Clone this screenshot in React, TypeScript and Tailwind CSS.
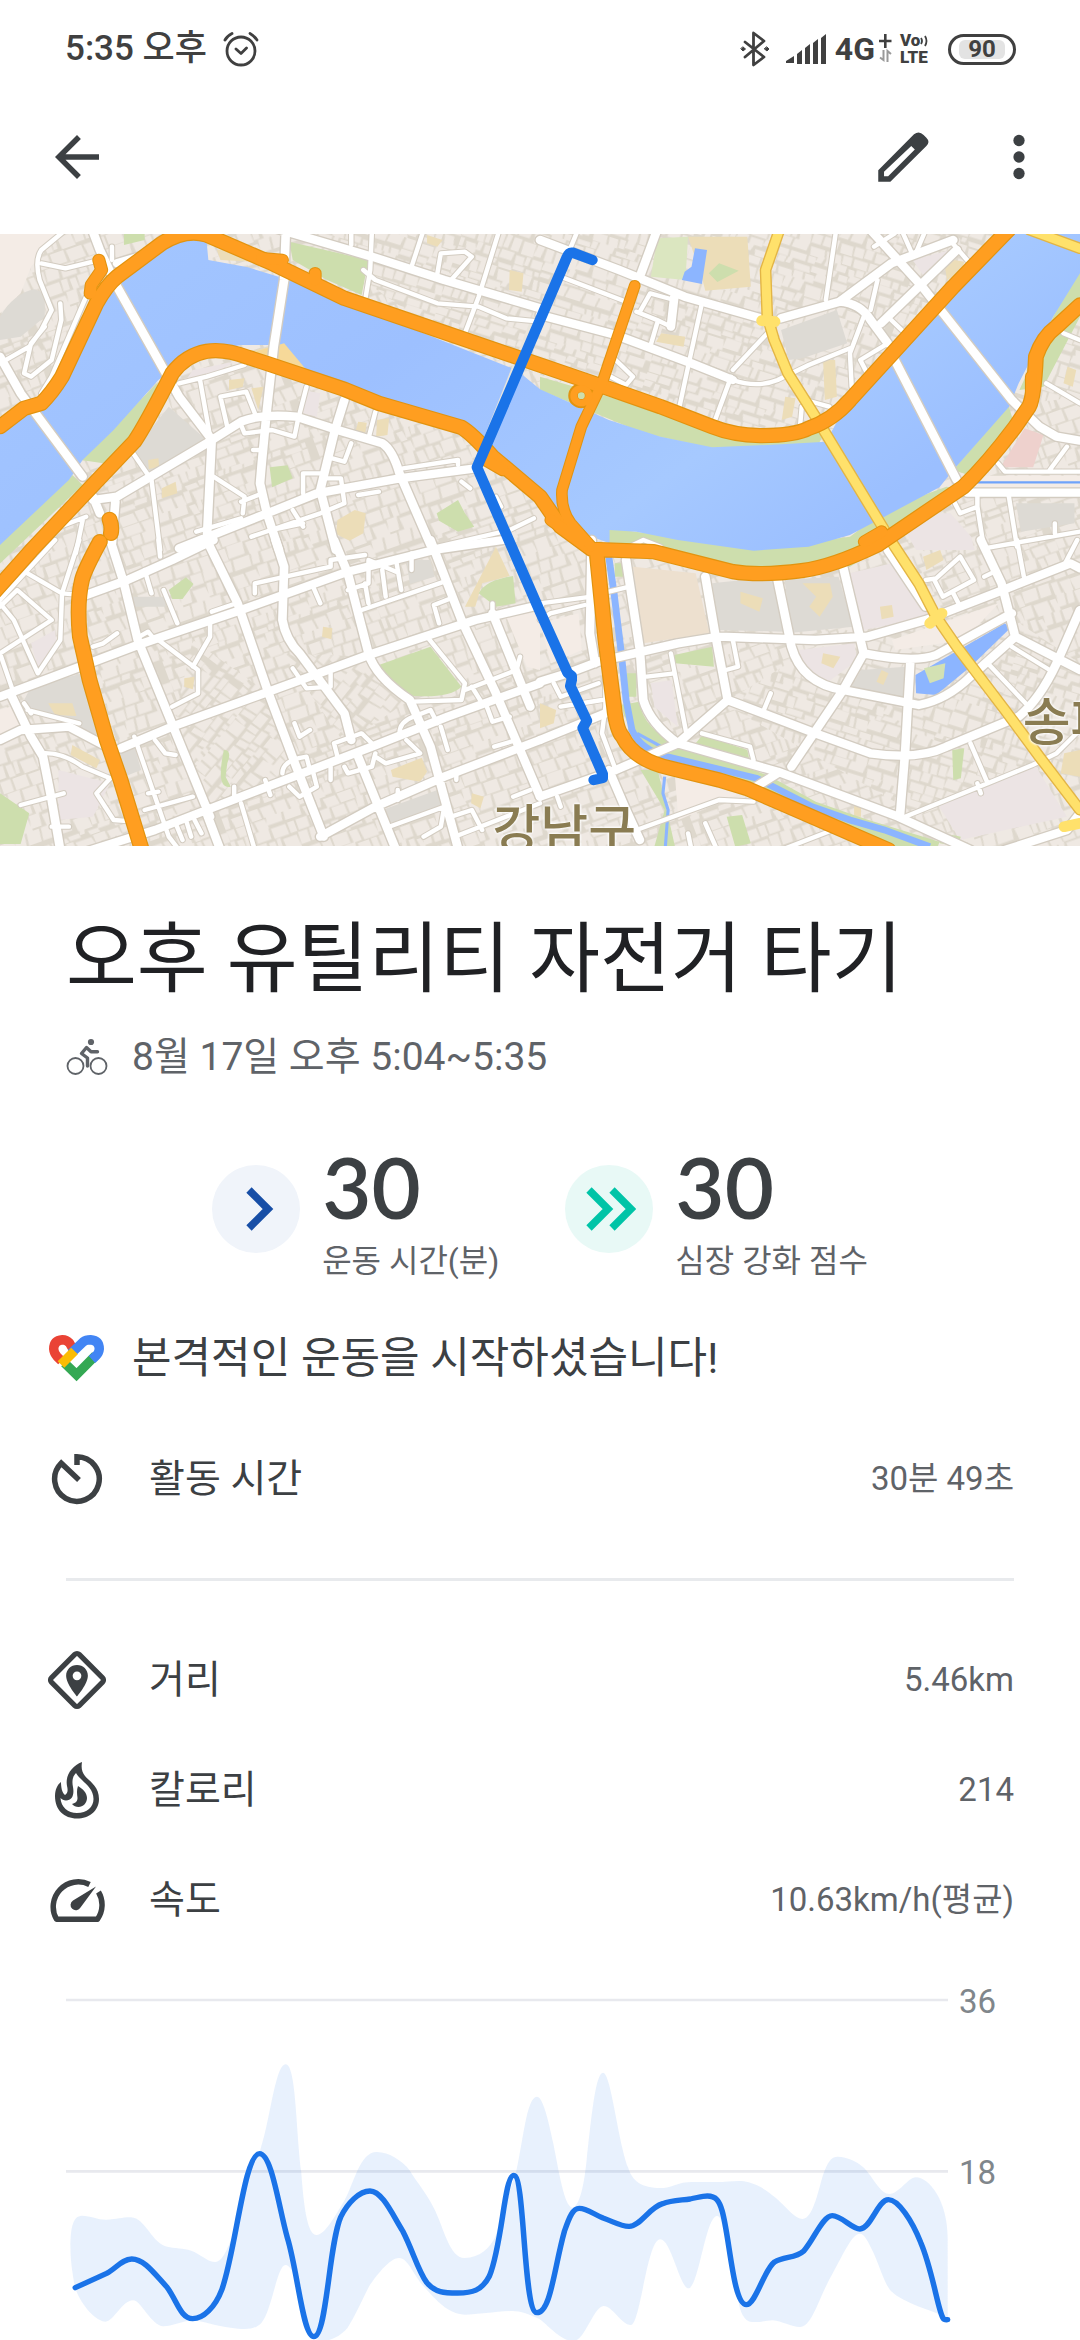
import type { ReactNode } from 'react';

type Quad = { x: number; y: number; wide: string[]; mid: string[] };

/* Street network, grouped by map tile. */
const quads: Quad[] = [
  {
    x: 0,
    y: 0,
    wide: [
      'M268 0L290 60L340 170L520 500L612 625',
      'M0 380L60 490L240 740',
      'M830 0L825 150L795 350L775 540L760 700L755 760L775 850L810 960',
      'M600 940L615 625',
      'M270 810L340 800L600 640L700 575Q760 550 860 560L980 600L1110 640Q1140 660 1160 730L1250 945',
      'M520 955L800 840L920 790L1160 745L1380 715',
      'M800 -5L1080 80L1290 150L1568 235',
      'M1000 510L970 610L930 780L975 960',
      'M340 100L420 75L470 30',
      'M270 800L290 850M335 815L325 940',
    ],
    mid: [
      'M190 0L120 60Q100 90 115 150L150 240L120 300L85 350L0 400',
      'M120 100L190 115L270 95M325 50V90',
      'M175 220L178 270L150 390L90 440L70 430L90 340L130 290',
      'M250 200L150 440L120 490',
      'M520 460L600 440L710 405M580 445L610 620',
      'M740 550L715 485L640 500L660 590',
      'M890 470L865 570L855 620L790 600L710 610L700 585',
      'M1090 545L1070 625M1020 640L1000 695L965 685',
      'M380 660L440 750L465 960',
      'M620 740L710 800L705 850M750 795L700 815M735 660H760',
      'M880 790V730H940M940 745L990 745L1000 820L930 850L730 920',
      'M850 840L880 890M790 900L880 880',
      'M1170 715L1330 690V705M1040 795L1100 785',
      'M570 905L700 865M1250 955L1480 900L1550 865',
      'M1080 0L1075 120L1062 200',
      'M1055 120L1090 150L1270 220L1390 230L1470 265L1568 275',
      'M1450 0L1390 200L1350 310M1230 0L1195 110M1020 0V45',
      'M1270 130L1280 70L1350 65L1370 80L1310 150',
      'M80 970L150 900L250 860M240 870L220 970M1340 755L1365 775M1440 800L1455 830',
    ],
  },
  {
    x: 1568,
    y: 0,
    wide: [
      'M0 30L230 120L290 145L420 200L640 265M700 265L870 215L1020 100L1200 30',
      'M340 0L290 140M0 255L220 315L440 400L560 450',
      'M960 0L1110 170L1370 510L1450 590L1500 620L1568 632',
      'M870 215Q930 220 960 270L1010 340M990 280L1210 60',
      'M390 200L380 290M1240 788H1568M1030 390L1210 750',
    ],
    mid: [
      'M110 0L90 50M60 140L250 215M280 245L340 270L380 290M340 280L320 350',
      'M470 220L430 410L405 530M660 310L560 420M555 440L505 580',
      'M560 450Q630 475 690 450L780 405L900 355',
      'M860 0L830 210M980 150L960 240M940 260L900 370L905 470M1010 340L930 390L950 430',
      'M1190 30L1240 90M1020 270L1050 300M1120 0L1095 60',
      'M210 380L270 440L250 465L205 440',
      'M290 245L320 190L390 210M770 510L840 530M760 530L755 590',
      'M1470 460L1568 520M1520 310L1568 330',
      'M1330 700L1350 725H1568M1530 650L1480 720',
      'M1200 810L1220 850L1270 830V790M1270 830L1290 960',
      'M1360 790L1385 950M1290 955L1568 905M1495 880V910',
      'M1080 70L1050 0M970 50L1030 10M270 945L300 930L350 950',
    ],
  },
  {
    x: 0,
    y: 930,
    wide: [
      'M320 0L360 130L400 300L495 540L610 830',
      'M0 470L130 420L400 315L700 210L1010 95L1260 30L1460 0',
      'M600 0L690 190L780 460L860 680L940 890',
      'M800 0L825 80L820 240Q830 300 870 340L1000 520L1020 600',
      'M0 600L60 570L200 560L310 620',
      'M350 625L500 560L900 410L1070 345L1380 240L1568 195',
      'M250 935L450 870L600 810L1080 620L1300 530L1568 430',
      'M1250 0L1340 240L1440 460L1568 770',
      'M970 0L1010 100L1070 340Q1090 410 1190 480L1250 620L1330 925',
      'M30 460L90 590L125 650L150 780L175 930',
      'M930 890L1090 800L1290 710L1568 600',
      'M1040 650L1150 930M1430 220L1540 500',
      'M250 165L370 120L500 60L620 0M600 820L640 930',
    ],
    mid: [
      'M0 340L150 240L50 150L0 200M160 0L0 180M80 100L180 160',
      'M230 0L180 160L175 300L110 400L40 240L0 190M0 340L40 460M180 160L240 165',
      'M460 0L465 50M420 90L440 160M475 150L515 250M270 320L300 310L340 280',
      'M460 300L575 390V460L500 500M610 240V290L560 380M405 290L430 275L450 300',
      'M740 160V130L960 80V60L1060 45M615 215L680 192',
      'M1150 60L1165 150M1110 90L1120 170M1050 210L1290 125M1195 40V90M1060 130L1070 190M1010 150L1070 130V60L1150 95',
      'M905 130L930 190M1310 175L1260 195L1275 250M1430 190V220',
      'M1240 290L1350 430L1340 480L1200 485M1350 450L1500 390L1510 350',
      'M850 385L890 445L960 440V400M855 550L870 590L900 570',
      'M120 640Q180 635 240 680L320 715L280 760L330 840L390 845',
      'M60 795L185 760M150 860H200M80 510L230 550M70 490L90 520',
      'M390 590L490 890L520 930M450 600L480 640L510 645M420 810L560 770M430 760L460 755',
      'M700 790L740 930M680 740V780M770 720L785 765',
      'M820 700Q820 660 890 650L900 690M840 740L870 770L920 740L910 700',
      'M980 650L970 610L1050 580L1090 620M960 680V720M1000 680L1010 700L1080 680L1090 640',
      'M1160 580Q1160 545 1200 530L1250 510L1270 550M1280 560L1300 630',
      'M1090 650L1120 670L1220 640L1180 600M1410 490L1430 545L1480 530M1370 440L1400 490',
      'M1130 860L1290 800L1280 860L1230 890M1490 770L1540 750M1310 830L1370 810L1400 870M1320 890L1568 790',
      'M510 850L530 900M540 840L555 890M565 840L585 880M1325 690V720M1155 750V780M1435 620L1500 600',
    ],
  },
  {
    x: 1568,
    y: 930,
    wide: [
      'M0 425L80 400L170 365L400 310L520 290L800 300L950 290L1120 240L1320 160L1540 70L1568 85',
      'M250 60L290 330L300 480Q320 550 400 610',
      'M480 110L510 290L545 480L400 610L690 695L1040 830L1250 930',
      'M690 120L730 320Q760 430 880 450L1100 495Q1180 480 1250 410L1380 290L1340 130L1280 0',
      'M880 80L940 340L880 450L730 680',
      'M940 340Q1090 370 1150 345L1370 220',
      'M545 480L800 580L960 640Q1100 660 1180 620L1390 530Q1450 480 1500 370L1568 210',
      'M1380 290L1568 390M1075 370L1060 640L1045 830',
      'M400 610L220 690L0 770M200 690L250 810L290 900',
      'M150 0L145 280L160 370M620 745L690 700M0 600L190 520',
      'M1568 820L1530 870L1350 930M1010 30L1120 200',
    ],
    mid: [
      'M200 155L260 140M0 190L150 170M0 240L30 220L130 195',
      'M380 340L425 580M310 410L390 400M560 300L575 380L540 390',
      'M650 510L670 460M470 580L610 620L620 660',
      'M1250 610L1300 730M1060 830L1300 730L1430 675L1500 640L1568 570M1270 730L1280 760',
      'M1300 370L1410 490M1370 320L1480 390M1385 0L1405 110',
      'M1220 50L1260 120L1170 170L1145 120L1220 50M1120 120L1150 115M1200 160L1215 190M1290 110L1320 95',
      'M280 870L520 780L620 785M480 850L510 920M430 880L440 930M700 930L850 870',
      'M1560 0L1525 70M40 430L60 470L170 430M60 500L180 480M50 770L60 800M190 370V500L180 580L220 690',
    ],
  },
];

const northHighway =
  'M0 590L70 535L120 520Q150 490 180 440L280 220Q310 165 340 140L470 40Q540 -5 600 15L790 100L1000 205L1568 405L1738 465L1918 530L2068 590Q2128 615 2208 617Q2308 617 2348 595Q2418 570 2468 510L2768 170L2928 0';
const southHighway =
  'M-20 1090L90 962L270 765L390 635Q420 590 500 430Q540 375 600 364Q650 355 720 382L780 402L1000 478L1100 520L1340 592Q1370 610 1430 680L1568 800L1628 890L1718 958L1898 965L2128 1025Q2208 1038 2328 1022Q2418 1010 2548 945L2798 770Q2868 700 2948 590L2988 530Q3003 500 3008 380Q3028 320 3068 290L3136 225';
const otherHighways = [
  'M1733 972L1758 1230L1783 1430Q1790 1500 1808 1520Q1840 1590 1948 1615L2088 1650L2168 1675L2268 1720L2580 1860',
  'M318 868Q326 890 322 910',
  'M290 935Q245 1020 238 1050Q222 1120 232 1220L260 1350L310 1530L350 1650L412 1860',
];
const yellowRoad =
  'M2263 0L2223 120L2228 260L2248 330L2288 430L2368 560L2568 900L2598 950L2668 1060L2718 1160L2778 1250L2918 1440L3018 1580L3136 1740';

const greens = [
  'M840 35L1070 90L1050 195L950 150L850 90Z',
  'M360 10H420V30L360 45Z',
  'M460 455L235 690L300 700L410 600Z',
  'M210 735L-10 950V1010L240 765Z',
  'M783 712L835 706L850 745L790 772Z',
  'M1268 850L1330 810L1350 850L1377 890L1330 905L1275 872Z',
  'M2058 130L2088 100L2145 122L2083 156Z',
  'M1568 440L1768 500L2050 590L2398 600L2378 640L2068 655L1868 610L1568 480Z',
  'M3136 110L3058 260L2960 480L3030 470L3136 260Z',
  'M2928 525L2768 720L2828 740L2950 600Z',
  'M1768 895L2208 955L2468 920L2578 835L2748 770L2818 780L2468 1010L2068 1010L1768 950Z',
  'M1100 1305L1250 1250L1340 1370Q1300 1410 1170 1395Q1130 1360 1100 1305Z',
  'M1390 1090Q1410 1050 1490 1038L1497 1120L1440 1130Z',
  'M490 1080L540 1042L562 1062L530 1107H500Z',
  'M0 1690L85 1750L60 1842H0Z',
  'M650 1560Q675 1560 660 1600L655 1640L670 1670Q625 1680 650 1560Z',
  'M1958 1275L2068 1250L2073 1310L1960 1300Z',
  'M2040 1515L2170 1560L2175 1585L2020 1540Z',
  'M1860 1620L1910 1620L1960 1850H1900L1930 1740Z',
  'M2765 1560L2800 1555L2790 1645L2768 1650Z',
  'M2110 1760L2155 1755L2180 1840L2135 1850Z',
  'M2690 1800L2790 1820L2780 1850L2730 1840Z',
  'M1820 1330H1848V1400H1820Z',
  'M1785 1000H1810V1040H1785Z',
];
const beiges = [
  'M980 870L1030 840L1062 850L1055 910L1015 932L975 912Z',
  'M725 365L825 340L895 425Z',
  'M1998 20H2170L2180 170L2048 182L2040 150Z',
  'M630 60L700 50L740 95L640 90Z',
  'M1350 1130L1440 950L1480 1038L1400 1060L1380 1130Z',
  'M1135 1620L1225 1583L1240 1625L1220 1655L1140 1640Z',
  'M140 1420H210L222 1458L160 1455Z',
  'M210 1545L290 1590L280 1615L205 1575Z',
  'M2150 1085L2215 1105L2205 1145L2150 1120Z',
  'M2330 1060L2410 1060L2418 1100L2380 1160L2350 1130L2370 1100Z',
  'M2555 1130L2590 1125L2595 1160L2560 1168Z',
  'M2390 1270L2440 1280L2420 1315L2385 1300Z',
  'M2560 1320L2580 1330L2565 1365L2545 1355Z',
  'M1920 310L1990 320L1985 350L1905 335Z',
  'M2390 390H2425L2430 500L2395 510Z',
  'M2280 500L2310 505L2300 560L2270 570Z',
  'M1480 120L1520 130L1515 185L1478 180Z',
  'M1240 15L1285 30L1270 50L1240 40Z',
  'M665 450L710 445L705 470L665 480Z',
  'M730 475L765 470L750 540Z',
  'M1095 570L1130 565L1125 615L1092 620Z',
  'M1040 575L1065 578L1060 612L1032 605Z',
  'M470 775L510 755L515 790L470 805Z',
  'M430 690L460 685L462 710L432 718Z',
  'M2740 85L2800 95L2790 130L2750 150Z',
  'M2480 1720H2500V1760H2480Z',
  'M3090 1570L3136 1560V1640L3080 1630Z',
  'M1568 1420L1615 1440L1608 1480L1568 1495Z',
  'M3100 410L3125 420L3115 470L3088 460Z',
  'M2680 980L2730 960L2740 990L2690 1020Z',
  'M1370 1690L1405 1700L1395 1735L1368 1720Z',
  'M535 1345L565 1340L560 1378L535 1370Z',
  'M938 1190L965 1195L962 1228L935 1220Z',
];
const greys = [
  'M0 260Q40 190 100 178L130 190V260L60 320L0 330Z',
  'M490 530L600 630L440 730L385 665Z',
  'M2268 300L2430 240L2460 340L2330 385L2290 390Z',
  'M2950 820H3120V880L2965 905Z',
  'M90 1370L240 1330L290 1530L230 1490L60 1430Z',
  'M380 1100H480V1130H380Z',
  'M1180 990H1250L1262 1040L1190 1062Z',
  'M2068 1060L2248 1040L2278 1205L2088 1200Z',
  'M2278 1050L2435 1040L2478 1190L2298 1208Z',
  'M2500 1320L2630 1310L2625 1400L2470 1375Z',
  'M1110 1740L1270 1680L1280 1730L1130 1780Z',
  'M330 1560L390 1550L410 1620L360 1640Z',
];
const mauves = [
  'M2468 1030L2628 990L2698 1160L2508 1200Z',
  'M2718 1715L3008 1610L3098 1760L2788 1830Z',
  'M2320 1260L2480 1240L2490 1290L2400 1360L2340 1340Z',
  'M1890 1360L1950 1350L1968 1490L1900 1430Z',
  'M2650 90L2760 60L2690 150Z',
  'M880 480L930 490L920 560L880 550Z',
  'M170 1620L320 1660L270 1760L170 1770Z',
  'M90 1240L160 1200L165 1260L110 1310Z',
  'M2600 850L2760 850L2820 920L2830 960L2660 960Z',
  'M560 420L680 395L640 420L540 450Z',
];

/* Deterministic city-block texture for one repeating tile. */
function blockTile(seed: number): string {
  let s = seed;
  const rnd = () => {
    s = (s * 1103515245 + 12345) % 2147483648;
    return s / 2147483648;
  };
  let d = '';
  let y = 0;
  while (y < 470) {
    const h = Math.round(14 + rnd() * 26);
    let x = 0;
    while (x < 620) {
      const w = Math.round(12 + rnd() * 38);
      const k = Math.round(rnd() * 12 - 6);
      d += `M${x} ${y + k}h${w}l${k} ${h}h${-w}z`;
      x += w + 6;
    }
    y += h + 6;
  }
  return d;
}

function BlockPattern({ id, angle, seed }: { id: string; angle: number; seed: number }) {
  return (
    <pattern id={id} width="640" height="480" patternUnits="userSpaceOnUse" patternTransform={`rotate(${angle})`}>
      <rect width="640" height="480" fill="#ded8cd" />
      <path d={blockTile(seed)} fill="#efe9e3" />
    </pattern>
  );
}

function RoadLayer({ kind, color, width }: { kind: 'wide' | 'mid'; color: string; width: number }) {
  return (
    <>
      {quads.map((q) => (
        <g key={`${q.x}-${q.y}`} transform={`translate(${q.x} ${q.y})`}>
          <path d={q[kind].join('')} fill="none" stroke={color} strokeWidth={width} strokeLinejoin="round" strokeLinecap="round" />
        </g>
      ))}
    </>
  );
}

function RouteMap() {
  const highways = [northHighway, southHighway, ...otherHighways].join('');
  const ramps = 'M287 90L295 120L265 165L262 190M760 85L820 90M915 130V150M1410 690L1460 720M1600 870L1700 945M2510 935L2560 905M2995 440V520';
  const bridge = 'M1843 167L1748 460L1688 590L1632 780Q1628 840 1658 880L1718 950';
  return (
    <section aria-label="운동 경로 지도" className="relative aspect-[1080/612] w-full overflow-hidden bg-[#f1ebe5]">
      <svg viewBox="0 12 3136 1836" preserveAspectRatio="none" className="block h-full w-full" aria-hidden="true">
        <defs>
          <BlockPattern id="blocksA" angle={-20} seed={7} />
          <BlockPattern id="blocksB" angle={18} seed={91} />
          <BlockPattern id="blocksC" angle={-52} seed={33} />
          <linearGradient id="river" x1="0" x2="1" y1="0" y2="0.4">
            <stop offset="0" stopColor="#a4c7ff" />
            <stop offset="0.45" stopColor="#9dc0ff" />
            <stop offset="0.8" stopColor="#a6c9ff" />
            <stop offset="1" stopColor="#9bbfff" />
          </linearGradient>
        </defs>
        <rect width="3136" height="1900" fill="url(#blocksA)" />
        <path d="M850 0L3136 0V500L2100 640L1300 330Z" fill="url(#blocksB)" />
        <path d="M560 1230L780 1390L860 1620L620 1740L500 1500ZM820 1270L1070 1280L1190 1410L1000 1540Z" fill="url(#blocksC)" />
        <path d="M2480 1180L2960 1180L3136 1300V1640L2640 1740L2100 1420Z" fill="url(#blocksB)" />
        <path
          d="M0 0H180L90 110L60 190L0 250ZM1470 1160L1568 1130V1320L1530 1310ZM2590 1230L2900 1120L2800 1230L2600 1260ZM1568 1180L1680 1150L1690 1260L1600 1300ZM0 1440L60 1420L80 1480L0 1520ZM1960 1640L2150 1690L1970 1770Z"
          fill="#f4ece6"
        />
        <path d={greys.join('')} fill="#dddad4" />
        <path d={mauves.join('')} fill="#ece4e4" />
        <path d={beiges.join('')} fill="#ecddb8" />
        <path d="M1838 1010L2020 1030L2060 1210L1868 1240Z" fill="#ede0cf" />
        <path d="M1908 25L1998 20L1990 150L1890 140Z" fill="#dbe6c0" />
        <path d="M2975 595L3030 615L3000 712H2905Z" fill="#eed1cd" />
        <path d={greens.join('')} fill="#cddead" />
        <path
          d="M0 600L100 530L180 440L290 200L340 150L480 40L560 22L600 35L605 90L720 112L840 150L1000 215L1500 420L1568 478L1768 570L1918 620L2068 652L2268 643L2398 635L2428 580L2568 420L2768 190L2938 0H3136V130L3058 260L2988 400L2958 460L2930 530L2768 720L2728 772L2568 860L2468 915L2348 950L2188 962L1968 930L1848 905L1770 900V940L1718 920L1628 860L1568 800L1430 670L1340 590L1000 480L880 415L820 345L700 345L620 360L540 390L460 450L330 600L240 690L200 750L0 945Z"
          fill="url(#river)"
        />
        <path d="M725 370L825 340L890 420Z" fill="#f6d999" />
        <path d="M2018 55L2053 60L2038 162L1980 150L1988 125L2008 110Z" fill="#8cb5ff" />
        <path d="M2658 1335L2918 1180L2933 1195L2818 1310L2718 1395L2660 1390Z" fill="#8cb5ff" />
        <path d="M2683 1315L2745 1300L2740 1345L2700 1360Z" fill="#d3e1b3" />
        <path d="M1830 1420Q1850 1520 1950 1560L2060 1600L2220 1660L2360 1740L2500 1790L2720 1860" fill="none" stroke="#cddead" strokeWidth="52" />
        <path d="M1765 960L1783 1090L1803 1260L1818 1410L1835 1500Q1860 1560 1938 1580L2198 1645L2358 1730L2468 1770L2568 1800L2700 1850" fill="none" stroke="#8cb5ff" strokeWidth="20" />
        <path d="M1930 1640L1925 1690L1940 1740L1932 1850M1850 1510L1920 1550" fill="none" stroke="#8cb5ff" strokeWidth="9" />
        <path d="M2800 757H3136" stroke="#f4ece6" strokeWidth="40" />
        <path d="M2820 757H3136" stroke="#6fa3fa" strokeWidth="7" />
        <path d="M1568 235L1385 712" stroke="#e9e5dc" strokeWidth="26" />

        <RoadLayer kind="mid" color="#d3ccc1" width={19} />
        <RoadLayer kind="wide" color="#d3ccc1" width={33} />
        <RoadLayer kind="mid" color="#ffffff" width={13} />
        <RoadLayer kind="wide" color="#ffffff" width={25} />

        <g fill="none" strokeLinejoin="round" strokeLinecap="round">
          <path d={`${yellowRoad}M2990 0L3136 55`} stroke="#e3b546" strokeWidth="34" />
          <path d={`${yellowRoad}M2990 0L3136 55`} stroke="#ffe16b" strokeWidth="26" />
          <path d="M2212 272L2250 275M2700 1180L2735 1150M3090 1790L3136 1780" stroke="#ffe16b" strokeWidth="32" />
          <path d={highways} stroke="#e2930f" strokeWidth="46" />
          <path d={ramps} stroke="#e2930f" strokeWidth="38" />
          <path d={bridge} stroke="#e2930f" strokeWidth="34" />
          <circle cx="1688" cy="497" r="24" stroke="#e2930f" strokeWidth="28" />
          <path d={highways} stroke="#ff9e20" strokeWidth="39" />
          <path d={ramps} stroke="#ff9e20" strokeWidth="32" />
          <path d={bridge} stroke="#ff9e20" strokeWidth="28" />
          <circle cx="1688" cy="497" r="22" stroke="#ff9e20" strokeWidth="20" />
          <path
            d="M1720 90L1663 68Q1652 66 1646 82L1385 712L1568 1145L1648 1328L1660 1338V1350L1656 1368L1704 1472L1692 1494L1750 1632V1644L1724 1650"
            stroke="#1a73e8"
            strokeWidth="31"
          />
        </g>
      </svg>
      <span className="absolute top-[565px] left-[45.6%] text-[52px] leading-[64px] font-medium whitespace-nowrap text-[#8a7c52] [text-shadow:0_0_3px_#fff,0_0_3px_#fff,0_0_3px_#fff]">
        강남구
      </span>
      <span className="absolute top-[458px] left-[94.7%] text-[52px] leading-[64px] font-medium whitespace-nowrap text-[#8a7c52] [text-shadow:0_0_3px_#fff,0_0_3px_#fff,0_0_3px_#fff]">
        송파구
      </span>
    </section>
  );
}

function StatusBar() {
  return (
    <div className="flex h-[98px] items-center justify-between pr-16 pl-[65px] text-[#404040]">
      <div className="flex items-center gap-4">
        <span className="text-[35px] leading-10 font-medium">5:35 오후</span>
        <svg width="36" height="36" viewBox="0 0 36 36" fill="none" stroke="currentColor" strokeWidth="2.8" strokeLinecap="round" strokeLinejoin="round" aria-label="알람">
          <circle cx="18" cy="20" r="14" />
          <path d="M13 18l5 4.500L23.500 17M2 9Q4 5 9 2.500M27 2.500Q31.500 5 34 9" />
        </svg>
      </div>
      <div className="flex items-center">
        <svg width="30" height="36" viewBox="0 0 30 36" fill="none" stroke="currentColor" strokeWidth="2.8" strokeLinecap="round" strokeLinejoin="round" aria-label="블루투스">
          <path d="M5 11l19 15-10.500 8V2L24 10 5 26" />
          <path d="M3 16l2.500 2L3 20 1 18zM27 16l2 2-2 2-2.500-2z" fill="currentColor" strokeWidth="1" />
        </svg>
        <svg className="ml-4" width="41" height="30" viewBox="0 0 41 30" fill="currentColor" aria-label="신호 세기">
          <path d="M0 29v-2l8-5v7zM11 20l5-4v14h-5zM19 14l5-4v20h-5zM27 9l5-4v25h-5zM35 4l5-4v30h-5z" />
        </svg>
        <span className="ml-2 text-[32px] leading-10 font-bold">4G</span>
        <svg className="ml-1" width="13" height="30" viewBox="0 0 13 30" fill="none" strokeWidth="2.6" aria-hidden="true">
          <path d="M0 7h12.500M6.300 0v14" stroke="currentColor" />
          <path d="M4.500 16v10L1 23.500M8.500 28V17l3.500 3" stroke="#9a9a9a" strokeWidth="2" />
        </svg>
        <span className="ml-2 flex w-8 flex-col text-[17px] leading-[17px] font-black">
          <span className="flex items-center">
            Vo
            <svg width="8" height="12" viewBox="0 0 8 12" fill="none" stroke="currentColor" strokeWidth="1.8" aria-hidden="true">
              <path d="M1 3q2 3 0 6M5 1q3 5 0 10" />
            </svg>
          </span>
          <span>LTE</span>
        </span>
        <span className="ml-4 flex h-[31px] w-17 items-center rounded-full border-3 border-current px-2">
          <span className="flex-1 rounded-md bg-[#e3e3e3] text-center text-[24px] leading-[19px] font-bold">90</span>
        </span>
      </div>
    </div>
  );
}

function TopBar() {
  return (
    <header className="mb-[18px] flex h-[118px] items-center pr-7 pl-11 text-[#3c4043]">
      <button type="button" aria-label="뒤로">
        <svg width="66" height="66" viewBox="0 0 24 24" fill="currentColor">
          <path d="M20 11H7.830l5.590-5.590L12 4l-8 8 8 8 1.410-1.410L7.830 13H20v-2z" />
        </svg>
      </button>
      <button type="button" aria-label="수정" className="mr-[50px] ml-auto">
        <svg width="66" height="66" viewBox="0 0 24 24" fill="currentColor" fillRule="evenodd">
          <path d="M3 16.800L16 3.700Q17.900 2.300 19.500 4L20.500 5Q22 6.500 20.500 8L7.400 21H3zM5.100 17.400V19H6.600L16.300 9.300L15 8z" />
        </svg>
      </button>
      <button type="button" aria-label="더보기">
        <svg width="66" height="66" viewBox="0 0 24 24" fill="currentColor">
          <circle cx="12" cy="6" r="2.050" />
          <circle cx="12" cy="12" r="2.050" />
          <circle cx="12" cy="18" r="2.050" />
        </svg>
      </button>
    </header>
  );
}

function BikeIcon() {
  return (
    <svg width="42" height="38" viewBox="0 0 42 38" fill="none" stroke="currentColor" strokeLinecap="round" strokeLinejoin="round" aria-label="자전거">
      <circle cx="9.500" cy="28" r="8" strokeWidth="1.800" />
      <circle cx="32.500" cy="28" r="8" strokeWidth="1.800" />
      <circle cx="25" cy="4" r="3.100" fill="currentColor" stroke="none" />
      <path d="M21.500 28V20L15.500 15.500L20.500 9.500L25 13.800H31.500" strokeWidth="3.400" />
    </svg>
  );
}

function HeartLogo() {
  return (
    <svg width="55" height="47" viewBox="0 0 55 47" fill="none" strokeWidth="9.400" aria-hidden="true">
      <path d="M25 16L20.500 8Q17.500 4.700 13.500 4.700Q4.700 5.500 4.700 14Q5 18 8 21.500L12.500 26" stroke="#ea4335" />
      <path d="M46.500 20.500L27.500 39.700L15.500 28" stroke="#34a853" />
      <path d="M22 18.500L34 7Q37 4.700 41.500 4.700Q50.300 5.500 50.300 14Q50 18 47 20.800L43 24.500" stroke="#4285f4" />
      <path d="M12 29.500L25.500 16" stroke="#fbbc04" />
    </svg>
  );
}

function TimerIcon() {
  return (
    <svg width="52" height="52" viewBox="0 0 52 52" fill="none" stroke="currentColor" strokeWidth="5.500" aria-hidden="true">
      <path d="M26 12V3.700A22.300 22.300 0 1 1 10.200 10.200L28 27" strokeLinejoin="miter" />
    </svg>
  );
}

function DistanceIcon() {
  return (
    <svg width="60" height="60" viewBox="0 0 58 58" aria-hidden="true">
      <rect x="10" y="10" width="38" height="38" rx="3" transform="rotate(45 29 29)" fill="none" stroke="currentColor" strokeWidth="5" />
      <path
        d="M29 14.500C23 14.500 18.500 19 18.500 25C18.500 33 29 45 29 45S39.500 33 39.500 25C39.500 19 35 14.500 29 14.500ZM29 29.200A4.200 4.200 0 1 1 29 20.800A4.200 4.200 0 0 1 29 29.200Z"
        fill="currentColor"
        fillRule="evenodd"
      />
    </svg>
  );
}

function CalorieIcon() {
  return (
    <svg width="44" height="57" viewBox="0 0 44 57" fill="currentColor" fillRule="evenodd" aria-hidden="true">
      <path d="M27 0C26 6 27 10 30 14C34 19 44 24 44 37C44 49 34 56.500 22 56.500C9 56.500 0 48 0 34C0 28 2 23 6 20C6 25 7 31 10 33C13 31 13 28 12 24C10 13 17 4 27 0ZM21 11C17 15 17 20 18 25C19.500 33 17 38.500 11 38.500C8.500 38.500 7 37.500 5.500 36C6 45 13 51 22 51C32 51 38.500 45 38.500 37C38.500 28 32 23 27 18C24 15 22 13 21 11Z" />
      <path d="M23 24C28 27 32 31 32 36C32 41 28 45 23.500 45C21 45 18.500 44 17 42C21 41 22.500 39 22.500 36C22 32 21.500 28 23 24Z" />
    </svg>
  );
}

function SpeedIcon() {
  return (
    <svg width="56" height="45" viewBox="0 0 56 45" fill="none" stroke="currentColor" strokeWidth="5.500" strokeLinejoin="round" aria-hidden="true">
      <path d="M40.500 6.500A25 25 0 0 0 7.500 41.200H48.500A25 25 0 0 0 49.500 14" />
      <path d="M47 8.500L31.500 29.500A5.300 5.300 0 1 1 24 22.500Z" fill="currentColor" stroke="none" />
    </svg>
  );
}

function Score({ value, label, circle, children }: { value: string; label: string; circle: string; children: ReactNode }) {
  return (
    <div className="flex items-start gap-[22px]">
      <span className={`mt-[21px] flex size-22 items-center justify-center rounded-full ${circle}`}>{children}</span>
      <div className="flex flex-col gap-[9px]">
        <span className="font-[Lato] text-[85px] leading-[84px] font-semibold text-[#3c4043]">{value}</span>
        <span className="text-[32px] leading-12 text-[#5f6368]">{label}</span>
      </div>
    </div>
  );
}

function StatRow({ icon, label, value }: { icon: ReactNode; label: string; value: string }) {
  return (
    <div className="flex h-[110px] items-center pr-[66px] pl-11 text-[#3c4043]">
      <dt className="flex items-center gap-[39px] text-[39px] leading-[56px]">
        <span className="flex w-[66px] justify-center">{icon}</span>
        <span>{label}</span>
      </dt>
      <dd className="ml-auto text-[33px] leading-12 text-[#5f6368]">{value}</dd>
    </div>
  );
}

function SpeedChart() {
  return (
    <figure className="mx-[66px] flex" aria-label="속도 그래프">
      <svg viewBox="192 111 2562 1029" preserveAspectRatio="none" className="h-[343px] min-w-0 flex-1 overflow-visible" fill="none">
        <path d="M192 117H2754M192 631H2754" stroke="#e8e9ee" strokeWidth="8" />
        <path
          d="M205 860C205 800 212 765 238 764C265 764 285 777 310 776C340 775 360 768 380 769C425 771 440 850 490 858C520 864 540 861 565 873C590 886 605 903 625 903C650 900 660 860 675 830L720 640L757 565C785 480 800 310 830 310C860 310 860 500 875 630C883 740 893 822 920 822C945 820 970 770 1000 720C1030 665 1045 573 1095 573C1130 573 1170 600 1190 628C1215 670 1235 690 1260 740C1290 800 1305 890 1350 891C1395 890 1425 860 1440 825L1500 630C1520 540 1530 407 1560 407C1575 407 1590 460 1608 550C1625 640 1640 735 1662 740C1680 740 1695 690 1704 600C1718 470 1730 335 1752 335C1775 335 1795 540 1825 620C1840 670 1875 681 1928 681C1955 679 1970 663 2010 663H2080C2120 663 2150 655 2175 664C2210 675 2230 690 2255 712C2290 745 2310 774 2332 774C2360 772 2375 700 2390 645C2405 600 2415 588 2433 587C2465 588 2500 605 2518 630C2545 665 2560 699 2584 699C2610 699 2640 649 2660 649C2700 649 2753 720 2753 830V1070C2700 1045 2630 1030 2588 990C2570 970 2550 900 2535 870C2522 840 2510 818 2498 818C2475 818 2450 880 2420 935C2380 1005 2360 1098 2324 1098C2300 1098 2270 1080 2245 1078C2225 1078 2205 1085 2185 1083C2160 1082 2150 1050 2145 1020L2100 800C2095 780 2093 765 2083 765C2050 765 2030 982 2000 982C1975 982 1950 835 1918 835C1880 835 1860 1092 1833 1092C1805 1092 1780 1035 1754 1035C1725 1035 1700 1139 1666 1140C1630 1140 1600 1100 1568 1075C1540 1060 1510 1050 1490 1050C1440 1051 1390 1061 1350 1061C1300 1058 1270 1020 1230 975C1200 940 1185 891 1160 891C1130 891 1090 950 1073 975C1050 1020 1030 1070 1010 1100C990 1125 960 1140 935 1140L905 1130L860 950C850 930 840 912 830 912C805 912 790 1050 760 1085C740 1108 710 1106 670 1100C630 1097 590 1080 560 1078C530 1080 500 1096 475 1096C440 1095 410 1018 387 1018C355 1018 330 1082 307 1082C280 1080 240 1040 218 980C210 930 205 900 205 860Z"
          fill="#1a73e8"
          fillOpacity="0.1"
        />
        <path
          d="M219 980L310 937C340 920 355 894 383 894C420 894 450 940 485 978C515 1020 525 1073 560 1073C590 1073 625 1040 645 985C685 870 710 578 754 578C790 578 810 740 835 830C865 930 880 1127 912 1127C950 1127 955 850 990 768C1010 725 1045 690 1075 690C1110 690 1140 760 1170 810C1200 870 1215 930 1240 965C1265 995 1290 996 1330 996C1370 996 1400 990 1422 945C1460 850 1465 643 1493 643C1525 643 1520 1055 1560 1055C1600 1055 1610 920 1640 810C1655 765 1665 742 1683 742C1705 742 1725 760 1752 771C1785 783 1805 797 1828 796C1860 796 1885 740 1925 728C1950 718 1980 718 2005 714C2030 709 2040 705 2055 705C2080 705 2090 720 2098 750C2120 830 2130 1031 2168 1031C2195 1031 2220 925 2250 903C2280 885 2310 893 2335 870C2365 835 2390 764 2418 764C2445 764 2475 804 2498 804C2530 804 2550 716 2581 716C2610 716 2650 780 2675 845C2710 930 2725 1050 2740 1072Q2743 1077 2753 1076"
          stroke="#1a73e8"
          strokeWidth="16"
          strokeLinecap="round"
          strokeLinejoin="round"
        />
      </svg>
      <div className="-mt-4 flex w-[66px] flex-col gap-[131px] pl-[11px] text-[33px] leading-10 text-[#80868b]">
        <span>36</span>
        <span>18</span>
      </div>
    </figure>
  );
}

export default function App() {
  return (
    <div className="min-h-screen w-full overflow-hidden bg-white font-[Roboto,'Noto_Sans_CJK_KR',sans-serif]">
      <StatusBar />
      <TopBar />
      <RouteMap />
      <main>
        <h1 className="mt-[58px] px-[66px] text-[77px] leading-[112px] text-[#202124]">오후 유틸리티 자전거 타기</h1>
        <p className="mt-[13px] flex items-center gap-6 px-[66px] text-[39px] leading-[56px] text-[#5f6368]">
          <BikeIcon />
          <span>8월 17일 오후 5:04~5:35</span>
        </p>
        <div className="mt-[59px] flex justify-center gap-[66px]">
          <Score value="30" label="운동 시간(분)" circle="bg-[#f0f4fa]">
            <svg width="28" height="44" viewBox="0 0 28 44" fill="none" stroke="#174ea6" strokeWidth="7.500" className="ml-2" aria-hidden="true">
              <path d="M3 3L22 22L3 41" />
            </svg>
          </Score>
          <Score value="30" label="심장 강화 점수" circle="bg-[#e8f9f6]">
            <svg width="50" height="44" viewBox="0 0 50 44" fill="none" stroke="#00c4a7" strokeWidth="7.500" className="ml-1" aria-hidden="true">
              <path d="M3 3L22 22L3 41M26 3L45 22L26 41" />
            </svg>
          </Score>
        </div>
        <p className="mt-[41px] flex items-center gap-7 px-[49px] text-[43px] leading-16 text-[#3c4043]">
          <HeartLogo />
          <span>본격적인 운동을 시작하셨습니다!</span>
        </p>
        <dl className="mt-[34px]">
          <StatRow icon={<TimerIcon />} label="활동 시간" value="30분 49초" />
        </dl>
        <hr className="mx-[66px] mt-11 border-t-3 border-[#e8eaed]" />
        <dl className="mt-11">
          <StatRow icon={<DistanceIcon />} label="거리" value="5.46km" />
          <StatRow icon={<CalorieIcon />} label="칼로리" value="214" />
          <StatRow icon={<SpeedIcon />} label="속도" value="10.63km/h(평균)" />
        </dl>
        <div className="mt-[43px]">
          <SpeedChart />
        </div>
      </main>
    </div>
  );
}
